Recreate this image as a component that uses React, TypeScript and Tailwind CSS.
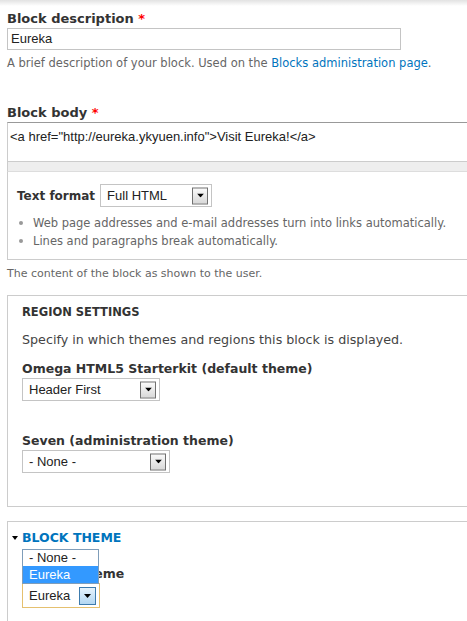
import React from "react";

const lblBase = "font-['DejaVu_Sans',sans-serif] font-bold leading-[18px] text-[#333]";
const descBase = "font-['DejaVu_Sans',sans-serif] text-[#666]";

function Arrow({ focused }: { focused?: boolean }) {
  return (
    <span
      className={
        focused
          ? "absolute right-[3px] top-1/2 -translate-y-1/2 w-[17px] h-[18px] border border-[#3d7bad] bg-gradient-to-b from-[#e6f3fc] to-[#b3d7f2] flex items-center justify-center"
          : "absolute right-[3px] top-1/2 -translate-y-1/2 w-[16px] h-[17px] border border-[#707070] bg-gradient-to-b from-[#fafafa] to-[#d8d8d8] flex items-center justify-center"
      }
    >
      <svg width="7" height="4" viewBox="0 0 7 4">
        <path d="M0 0h7L3.5 4z" fill="#000" />
      </svg>
    </span>
  );
}

function Select({
  value,
  className,
  focused,
}: {
  value: string;
  className: string;
  focused?: boolean;
}) {
  return (
    <div
      className={
        "relative bg-white flex items-center pl-[6px] font-['Liberation_Sans',Arial,sans-serif] text-[13px] text-[#222] " +
        (focused ? "border border-[#e5c06f] " : "border border-[#c4c4c4] ") +
        className
      }
    >
      {value}
      <Arrow focused={focused} />
    </div>
  );
}

export default function App() {
  return (
    <div className="w-[467px] h-[621px] overflow-hidden bg-white">
      <div className="h-[6px] bg-gradient-to-b from-[#e2e2e2] to-white" />
      <div className="pl-[7px] w-[520px]">
        {/* Block description */}
        <div className={lblBase + " text-[13px] mt-[4px]"}>
          Block description <span className="text-[#f00]">*</span>
        </div>
        <div className="w-[394px] h-[22px] border border-[#c4c4c4] flex items-center pl-[3px] font-['Liberation_Sans',Arial,sans-serif] text-[13px] text-[#222]">
          Eureka
        </div>
        <div className={descBase + " text-[11.5px] leading-[14px] mt-[6px]"}>
          A brief description of your block. Used on the{" "}
          <span className="text-[#0074bd]">Blocks administration page</span>.
        </div>

        {/* Block body */}
        <div className={lblBase + " text-[13px] mt-[34px]"}>
          Block body <span className="text-[#f00]">*</span>
        </div>
        <div className="h-[39px] border-t border-t-[#999] border-l border-l-[#ccc] pl-[2px] pt-[5px] font-['Liberation_Sans',Arial,sans-serif] text-[13px] leading-[17px] text-[#222]">
          {'<a href="http://eureka.ykyuen.info">Visit Eureka!</a>'}
        </div>
        <div className="h-[11px] bg-[#eeeeee] border-t border-t-[#cccccc] border-b border-b-[#dddddd] border-l border-l-[#ccc]" />
        <div className="border-l border-b border-[#ccc] pl-[9px] pt-[12px] pb-[9px]">
          <div className="flex items-center">
            <span className={lblBase + " text-[12px] mr-[5px]"}>Text format</span>
            <Select value="Full HTML" className="w-[112px] h-[23px]" />
          </div>
          <ul className="mt-[7px]">
            <li className={descBase + " text-[11.5px] leading-[18px] flex items-center"}>
              <span className="w-[4px] h-[4px] rounded-full bg-[#999] ml-[2px] mr-[10px]" />
              Web page addresses and e-mail addresses turn into links automatically.
            </li>
            <li className={descBase + " text-[11.5px] leading-[18px] flex items-center"}>
              <span className="w-[4px] h-[4px] rounded-full bg-[#999] ml-[2px] mr-[10px]" />
              Lines and paragraphs break automatically.
            </li>
          </ul>
        </div>
        <div className={descBase + " text-[11px] leading-[14px] mt-[7px]"}>
          The content of the block as shown to the user.
        </div>

        {/* Region settings */}
        <div className="mt-[14px] border-t border-l border-b border-[#ccc] pl-[14px] pt-[7px] pb-[33px]">
          <div className={lblBase + " text-[11.5px]"}>REGION SETTINGS</div>
          <div className="mt-[10px] font-['DejaVu_Sans',sans-serif] text-[12.7px] leading-[18px] text-[#444]">
            Specify in which themes and regions this block is displayed.
          </div>
          <div className={lblBase + " text-[12.5px] mt-[11px]"}>Omega HTML5 Starterkit (default theme)</div>
          <Select value="Header First" className="w-[138px] h-[23px]" />
          <div className={lblBase + " text-[12.5px] mt-[31px]"}>Seven (administration theme)</div>
          <Select value="- None -" className="w-[148px] h-[23px]" />
        </div>

        {/* Block theme */}
        <div className="mt-[14px] border-t border-l border-[#ccc] pt-[7px] h-[120px]">
          <div className="flex items-center pl-[4px]">
            <svg width="6" height="4" viewBox="0 0 6 4" className="mr-[4px]">
              <path d="M0 0h6L3 4z" fill="#000" />
            </svg>
            <span className="font-['DejaVu_Sans',sans-serif] font-bold text-[12.5px] leading-[18px] text-[#0074bd]">
              BLOCK THEME
            </span>
          </div>
          <div className="relative pl-[14px]">
            <div className={lblBase + " text-[12.5px] mt-[18px]"}>Custom theme</div>
            <Select value="Eureka" className="w-[78px] h-[25px]" focused />
            <div className="absolute left-[14px] top-[-16px] w-[77px] border border-[#7f9db9] bg-white font-['Liberation_Sans',Arial,sans-serif] text-[13px]">
              <div className="h-[16px] leading-[16px] pl-[6px] text-[#222]">- None -</div>
              <div className="h-[17px] leading-[17px] pl-[6px] bg-[#3399ff] text-white">Eureka</div>
            </div>
          </div>
        </div>
      </div>
    </div>
  );
}
